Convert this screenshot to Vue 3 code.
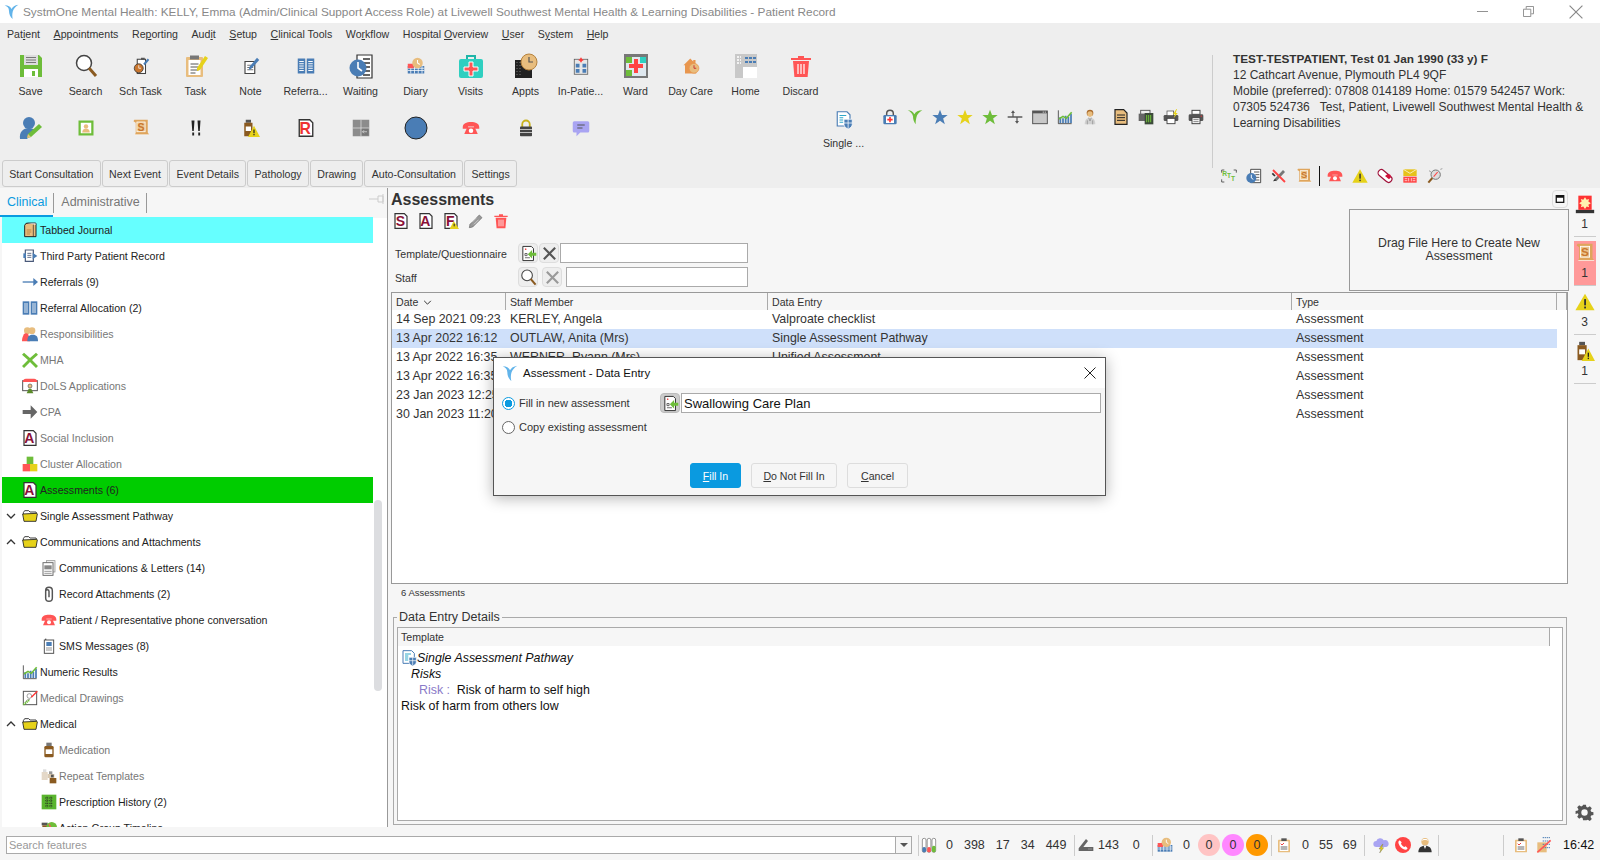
<script setup>
// small helpers for the icon artwork, everything is drawn in a 24x24 box
const phone = '<path d="M1 11c0-5 5-7 11-7s11 2 11 7v2h-7v-3H8v3H1z" fill="#f55"/><path d="M7 11h10l4 9H3z" fill="#f55"/><circle cx="12" cy="15.5" r="3" fill="#fff"/>'
const warn = '<path d="M12 2L23.5 22H.5z" fill="#e6d21a"/><rect x="11" y="8.5" width="2.2" height="7.5" fill="#333"/><rect x="11" y="17.5" width="2.2" height="2.2" fill="#333"/>'
const trash = '<path d="M9 2h6v2h7v2H2V4h7z" fill="#f55"/><path d="M4 7h16l-1.4 16H5.4z" fill="#f55"/><path d="M9 10v10M12 10v10M15 10v10" stroke="#fff" stroke-width="1.2"/>'
const folder = '<path d="M2 7l2-3h6l2 2h9l1 2v2H2z" fill="#fff" stroke="#222" stroke-width="1.3"/><path d="M1 9l21-1 1 1-2 11H3z" fill="#e6d21a" stroke="#222" stroke-width="1.3"/>'
const scroll = '<path d="M3 1h18v17l2 3H4l1-3V5L2 3z" fill="#dfa55c"/><path d="M4 21h19" stroke="#fff" stroke-width=".8"/><rect x="6.5" y="4" width="11" height="13" fill="#ecc68e" stroke="#fff" stroke-width="1"/><text x="12" y="15.5" text-anchor="middle" font-size="14" font-weight="700" font-family="Liberation Sans" fill="#c9762e">S</text>'
const rec = (c, l) => `<path d="M3 1h14l4 4v18H3z" fill="#fff" stroke="#333" stroke-width="1.8"/><text x="11" y="20" text-anchor="middle" font-size="21" font-weight="700" font-family="Liberation Sans" fill="${c}">${l}</text>`
const clip = '<rect x="3" y="4" width="18" height="19" rx="1" fill="#e8bd7e"/><rect x="5.5" y="6.5" width="13" height="14.5" fill="#fff"/><rect x="8" y="2" width="8" height="4" fill="#555"/><path d="M7 10l2 2 3-3" stroke="#e33" stroke-width="1.4" fill="none"/><path d="M7 15h10M7 18h10" stroke="#555" stroke-width="1.3"/>'
const chart = '<path d="M2 2v20h20" stroke="#333" fill="none" stroke-width="1.2"/><path d="M5 12v9M9 14v7M13 10v11M17 12v9M21 7v14" stroke="#4a7db5" stroke-width="2.6"/><path d="M3 15l6-4 5 3 8-9" stroke="#6ebd3a" stroke-width="2.4" fill="none"/>'
const referral = '<rect x="1" y="2" width="10" height="20" fill="#4a7db5"/><rect x="13" y="2" width="10" height="20" fill="#4a7db5"/><path d="M3 6h6M3 9h6M3 12h6M3 15h6M3 18h6M15 6h6M15 9h6M15 12h6M15 15h6M15 18h6" stroke="#fff" stroke-width="1.3"/>'
const tpl = '<path d="M4 2h12l3 3v17H4z" fill="#fff" stroke="#333" stroke-width="1.4"/><path d="M7 6h2M8 5v2" stroke="#e33" stroke-width="1.2"/><path d="M7 12h3v3H7zM7 18h7" stroke="#333" fill="none"/><path d="M23 11h-6V7l-6 6 6 6v-4h6z" fill="#6ebd3a"/>'
const printer = '<rect x="6" y="2" width="12" height="6" fill="#fff" stroke="#444" stroke-width="1.5"/><rect x="1" y="8" width="22" height="10" rx="2" fill="#555"/><rect x="6" y="13" width="12" height="9" fill="#fff" stroke="#444" stroke-width="1.5"/><path d="M8 16h8M8 19h8" stroke="#444"/><rect x="19" y="10" width="2" height="1.5" fill="#e33"/>'
const search = '<circle cx="10" cy="9" r="7.5" fill="#fff" stroke="#444" stroke-width="1.5"/><path d="M15 14l7 8" stroke="#8a5a20" stroke-width="3"/>'
const star = c => `<path d="M12 1l3 8h8.5l-6.8 5.3 2.6 8.7-7.3-5.3-7.3 5.3 2.6-8.7L.5 9H9z" fill="${c}"/>`
const clockDoc = '<path d="M7 2h15v20H7z" fill="#fff" stroke="#333" stroke-width="1.3"/><path d="M12 6h8M14 10h6M15 14h5M14 18h6" stroke="#333" stroke-width="1.2"/><circle cx="8" cy="15" r="7.5" fill="#4a7db5"/><path d="M8 10v5l3 2" stroke="#fff" stroke-width="1.4" fill="none"/>'
const diary = '<rect x="1" y="12" width="22" height="10" fill="#4a7db5"/><path d="M1 15h22M1 18h22M5 12v10M10 12v10M15 12v10M20 12v10" stroke="#fff"/><rect x="1" y="9" width="8" height="6" fill="#f55"/><circle cx="14" cy="8" r="7" fill="#e8bd7e"/><path d="M14 4v4l3 2" stroke="#fff" stroke-width="1.4" fill="none"/>'
const med = '<rect x="8" y="1" width="8" height="5" fill="#777"/><rect x="5" y="6" width="14" height="17" rx="2" fill="#8a5a20"/><rect x="7" y="11" width="10" height="7" fill="#fff"/>'

const icons = {
  logo: '<path d="M1 2c6 0 9 2 11 6 2-4 5-6 11-7-5 3-8 7-9 11-1 4-1 8 0 12-4-3-6-8-6-13C8 6 5 4 1 2z" fill="#62b4ea"/>',
  save: '<path d="M1 1h19l3 3v19H1z" fill="#6ebd3a"/><rect x="5" y="1" width="14" height="10" fill="#ddd"/><path d="M7 3.5h10M7 6h10M7 8.5h10" stroke="#777"/><rect x="5" y="15" width="14" height="8" fill="#fff"/><rect x="13" y="17" width="3" height="5" fill="#6ebd3a"/>',
  search,
  schtask: '<rect x="7" y="3" width="11" height="19" fill="#fff" stroke="#444" stroke-width="1.4"/><path d="M12 1h5v3h-5z" fill="#555"/><circle cx="9" cy="15" r="6" fill="#c9762e" stroke="#333"/><path d="M9 11v4h3" stroke="#fff" fill="none"/><path d="M15 9l6-7 2 2-6 7z" fill="#4a7db5"/>',
  task: '<rect x="2" y="3" width="17" height="20" rx="1" fill="#e8bd7e"/><rect x="4.5" y="6" width="12" height="15" fill="#fff"/><rect x="6" y="1.5" width="9" height="4" fill="#777"/><path d="M6.5 10h8M6.5 13h8M6.5 16h8M6.5 19h5" stroke="#555"/><path d="M13 14L21 2l3 2-8 12-3 1z" fill="#e6d21a"/>',
  note: '<path d="M4 6h13v16H4z" fill="#fff" stroke="#444" stroke-width="1.5"/><path d="M7 11h8M7 14h8M7 17h8" stroke="#444"/><path d="M10 13L20 1l3 3-11 12-3 1z" fill="#4a7db5"/>',
  referral,
  waiting: '<path d="M8 1h15v23H8z" fill="#fff" stroke="#333" stroke-width="1.2"/><path d="M14 5h7M14 9h7M16 13h5M16 17h5M14 21h7" stroke="#333" stroke-width="1.3"/><circle cx="9" cy="14" r="8.5" fill="#4a7db5"/><path d="M9 8v6l4 3" stroke="#fff" stroke-width="1.6" fill="none"/>',
  diary,
  visits: '<path d="M8 5V2h8v3" fill="none" stroke="#1fb5a8" stroke-width="2"/><rect x="0" y="5" width="24" height="19" rx="2" fill="#2fcfc0"/><path d="M10 8h4v5h5v4h-5v5h-4v-5H5v-4h5z" fill="#f55" stroke="#fff"/>',
  appts: '<rect x="1" y="6" width="17" height="18" fill="#222"/><path d="M3 8v14M6 8v14" stroke="#777" stroke-dasharray="1 2"/><circle cx="15" cy="8" r="8" fill="#e8bd7e" stroke="#b5823e"/><path d="M15 3v5h4" stroke="#555" fill="none" stroke-width="1.2"/>',
  inpatient: '<rect x="3" y="3" width="18" height="20" fill="#e7e7e7" stroke="#555"/><path d="M12 1v6M9 4h6" stroke="#f33" stroke-width="2"/><path d="M5 9h5v5H5zM14 9h5v5h-5zM5 16h5v5H5zM14 16h5v5h-5z" fill="#4a7db5"/>',
  ward: '<rect x="0" y="0" width="24" height="24" fill="#777"/><rect x="2" y="3" width="20" height="19" fill="#dfe8ef"/><rect x="2" y="3" width="6" height="6" fill="#6ebd3a"/><rect x="16" y="3" width="6" height="6" fill="#2fcfc0"/><rect x="2" y="16" width="6" height="6" fill="#6ebd3a"/><path d="M10 5h4v5h5v4h-5v5h-4v-5H5v-4h5z" fill="#f44"/>',
  daycare: '<path d="M2 11l9-9 4 4V4h3v5l3 3h-2v10H4V11z" fill="#e8964e"/><circle cx="16" cy="15" r="6.5" fill="#e8bd7e" stroke="#e8964e"/><path d="M16 11v4h3" stroke="#c33" fill="none" stroke-width="1.3"/>',
  home: '<rect x="1" y="0" width="22" height="24" fill="#c8c8c8"/><rect x="9" y="13" width="14" height="11" fill="#fff"/><path d="M3 3h2M3 6h2M3 9h2M6 3h1M6 6h1M6 9h1" stroke="#fff" stroke-width="1.6"/><path d="M11 3h3v2h-3zM15 3h3v2h-3zM19 3h3v2h-3zM11 7h3v2h-3zM15 7h3v2h-3zM19 7h3v2h-3z" fill="#4a7db5"/>',
  trash,
  person: '<circle cx="10" cy="7" r="6" fill="#4a7db5"/><path d="M1 23c-1-7 3-11 9-11 3 0 5 1 6 2L8 23z" fill="#4a7db5"/><path d="M8 22l1-4L20 8l3 3-11 10z" fill="#6ebd3a"/><path d="M8 22l1-4 3 3z" fill="#e8bd7e"/>',
  photo: '<rect x="2" y="2" width="20" height="20" fill="#6ebd3a"/><rect x="5" y="5" width="14" height="14" fill="#fff"/><circle cx="12" cy="10" r="3" fill="#e8bd7e"/><path d="M7 18c0-4 2-5 5-5s5 1 5 5z" fill="#e8bd7e"/>',
  scroll,
  exclam: '<path d="M6 2h4L9 16H7zM14 2h4l-1 14h-2z" fill="#222"/><rect x="7" y="18" width="2.5" height="4" fill="#222"/><rect x="15" y="18" width="2.5" height="4" fill="#222"/>',
  medwarn: '<rect x="5" y="1" width="7" height="4" fill="#555"/><rect x="3" y="5" width="11" height="18" fill="#8a5a20"/><rect x="5" y="10" width="7" height="6" fill="#fff"/><path d="M16 9l8 15H8z" fill="#e6d21a"/><rect x="15.2" y="14" width="1.6" height="5" fill="#222"/><rect x="15.2" y="20" width="1.6" height="1.7" fill="#222"/>',
  recR: rec('#e33', 'R'),
  grid: '<rect x="1" y="1" width="22" height="22" fill="#8c8c8c"/><path d="M12 1v22M1 12h22" stroke="#ddd"/><rect x="13" y="13" width="9" height="9" fill="#777"/><path d="M20 17h-6m2-2l-2 2 2 2" stroke="#ddd" fill="none"/>',
  circle: '<circle cx="12" cy="12" r="11" fill="#4a7db5" stroke="#222" stroke-width="1"/>',
  phone,
  lock: '<path d="M7 11V7a5 5 0 0 1 10 0v4" fill="none" stroke="#c9b21a" stroke-width="2.4"/><rect x="4" y="10" width="16" height="13" rx="1" fill="#444"/><path d="M4 14h16M4 18h16" stroke="#ccc" stroke-width="1.2"/>',
  chat: '<path d="M3 3h18a2 2 0 0 1 2 2v11a2 2 0 0 1-2 2H11l-5 5v-5H3a2 2 0 0 1-2-2V5a2 2 0 0 1 2-2z" fill="#a9a4f2"/><path d="M7 8h10M7 12h7" stroke="#555" stroke-width="1.4"/>',
  single: '<path d="M3 1h13l4 4v15H3z" fill="#fff" stroke="#4a7db5" stroke-width="1.5"/><path d="M6 6h9M6 9h5M6 12h5M6 15h5" stroke="#2fa8c9" stroke-width="1.5"/><path d="M12 11h11v7c0 3-3 5-5.5 6C15 23 12 21 12 18z" fill="#4a7db5" stroke="#fff"/><path d="M17.5 11v12M12 16h11" stroke="#fff"/>',
  medlock: '<path d="M7 10V7a5 5 0 0 1 10 0v3" fill="none" stroke="#555" stroke-width="2.2"/><rect x="2" y="9" width="20" height="14" rx="2" fill="#4a7db5"/><rect x="6" y="11" width="12" height="10" fill="#fff"/><path d="M12 12v8M8 16h8" stroke="#f33" stroke-width="2.4"/>',
  sprout: '<path d="M1 2c5 0 8 2 10 6 2-4 6-6 12-6-5 3-8 6-9 11-1 4-1 7-1 10-3-4-4-8-4-12C8 7 5 4 1 2z" fill="#6ebd3a"/>',
  starB: star('#4a7db5'),
  starY: star('#e6d21a'),
  starG: star('#6ebd3a'),
  split: '<path d="M1 12h22" stroke="#555" stroke-width="2.2"/><path d="M9 5v7M15 12v7" stroke="#555" stroke-width="1.8"/><path d="M6 6l3-4 3 4zM12 18l3 4 3-4z" fill="#555"/>',
  window: '<rect x="1" y="3" width="22" height="19" fill="#c8c8c8" stroke="#555" stroke-width="1.5"/><rect x="1" y="3" width="22" height="3.5" fill="#555"/><path d="M16 4.7h2M19 4.7h2" stroke="#fff"/>',
  chart,
  doctor: '<circle cx="12" cy="6" r="5" fill="#a8692a"/><circle cx="12" cy="7.5" r="4" fill="#e8bd7e"/><path d="M4 23c0-7 3-10 8-10s8 3 8 10z" fill="#d0d0d0"/><path d="M10 13l2 5 2-5M8 17v6M16 17v6" stroke="#888" fill="none"/>',
  docY: '<path d="M3 1h13l5 5v17H3z" fill="#e8bd7e" stroke="#222" stroke-width="1.8"/><path d="M6 9h12M6 13h12M6 17h12" stroke="#222" stroke-width="1.5"/>',
  printG: '<rect x="4" y="2" width="14" height="6" fill="#eee" stroke="#555" stroke-width="1.4"/><rect x="1" y="7" width="16" height="11" fill="#666"/><rect x="10" y="6" width="13" height="17" fill="#3c4a3a"/><path d="M13 9v11M16 9v11M19 9v11" stroke="#6ebd3a" stroke-width="1.6"/>',
  printF: '<rect x="1" y="9" width="22" height="9" rx="2" fill="#555"/><rect x="6" y="3" width="10" height="7" fill="#fff" stroke="#444"/><rect x="6" y="14" width="12" height="8" fill="#fff" stroke="#444" stroke-width="1.4"/><path d="M20 0l-5 8h3l-2 6 6-8h-3l2-6z" fill="#e6d21a"/>',
  printer,
  rtt: '<path d="M1 7V3h4M23 7V3h-4M1 17v4h4" stroke="#555" fill="none" stroke-width="1.4"/><text x="2" y="12" font-size="10" font-weight="700" font-family="Liberation Sans" fill="#6ebd3a">R</text><text x="9" y="15" font-size="10" font-weight="700" font-family="Liberation Sans" fill="#6ebd3a">T</text><text x="15" y="20" font-size="10" font-weight="700" font-family="Liberation Sans" fill="#6ebd3a">T</text>',
  clockDoc,
  toolX: '<path d="M5 17L18 3l3 3L8 20z" fill="#777"/><path d="M3 20l3-4 2 3z" fill="#333"/><path d="M3 3l18 18" stroke="#f44" stroke-width="2.8"/><path d="M2 8l4 4" stroke="#333" stroke-width="2.6"/>',
  pill: '<rect x="0" y="7" width="24" height="10" rx="5" transform="rotate(40 12 12)" fill="#fff" stroke="#a0123a" stroke-width="1.8"/><path d="M12 12l6 5 3-3-1-4-4-1z" fill="#d0123a"/>',
  sms: '<rect x="2" y="2" width="20" height="10" fill="#e6c21a"/><path d="M2 2l10 6 10-6" stroke="#fff" fill="none"/><rect x="2" y="13" width="20" height="9" fill="#f44"/><path d="M4 16h4M4 19h4M10 15v5M14 15v5M16 16h4M16 19h4" stroke="#fff"/>',
  magnify: '<circle cx="13" cy="10" r="7" fill="#ddd" stroke="#777" stroke-width="1.5"/><path d="M8 15l-6 7" stroke="#8a5a20" stroke-width="3"/><path d="M10 13l6-7" stroke="#f44" stroke-width="1.6"/><path d="M20 2l3-1M3 4l3 2" stroke="#777"/>',
  max: '<rect x="3" y="4" width="18" height="16" fill="#fff" stroke="#111" stroke-width="3"/><rect x="3" y="4" width="18" height="5" fill="#111"/>',
  alarm: '<rect x="1" y="19" width="22" height="4" fill="#333"/><rect x="4" y="2" width="16" height="17" fill="#f33"/><path d="M12 4l2 3 3-1-1 3 3 2-3 2 1 3-3-1-2 3-2-3-3 1 1-3-3-2 3-2-1-3 3 1z" fill="#fff3b0"/>',
  warn,
  journal: '<path d="M6 2h13a2 2 0 0 1 2 2v18H4V5z" fill="#e8bd7e" stroke="#222" stroke-width="1.5"/><path d="M8 2v-.5h13V4" fill="#fff" stroke="#222"/><path d="M17 4v18" stroke="#222"/><path d="M7 12h7M7 15h7M7 18h5" stroke="#b5823e" stroke-width="1.3"/>',
  third: '<path d="M5 3h12v17H5z" fill="#fff" stroke="#4a5a7a" stroke-width="1.8"/><path d="M8 8h6M8 11h6M8 14h6" stroke="#4a5a7a" stroke-width="1.3"/><path d="M2 8h4v7H2z" fill="#4a7db5"/><path d="M16 7l7 5-7 5z" fill="#4a7db5"/>',
  arrowB: '<path d="M1 11h18v2H1z" fill="#4a7db5"/><path d="M17 6l7 6-7 6z" fill="#4a7db5"/>',
  people: '<circle cx="8" cy="7" r="5" fill="#e8bd7e"/><circle cx="15" cy="7" r="5" fill="#e8bd7e"/><path d="M0 23c0-7 2-10 6-10s6 3 6 10z" fill="#f55"/><circle cx="6" cy="15" r="4" fill="#f55"/><path d="M8 23c0-7 2-10 8-10s8 3 8 10z" fill="#4a7db5"/>',
  xG: '<path d="M3 1l9 8 9-8 3 3-9 8 9 9-3 3-9-9-9 9-3-3 9-9-9-8z" fill="#6ebd3a"/>',
  dols: '<rect x="1" y="4" width="22" height="15" fill="#fff" stroke="#555" stroke-width="1.5"/><path d="M1 6c0-3 2-5 5-5h12c3 0 5 2 5 5z" fill="#f55"/><circle cx="12" cy="12" r="3" fill="#e8bd7e" stroke="#555"/><path d="M7 23l3-7h4l3 7z" fill="#5a8a2a"/>',
  arrowG: '<path d="M1 9h12V2l10 10-10 10v-7H1z" fill="#666"/>',
  recA: rec('#8a1038', 'A'),
  recS: rec('#8a1038', 'S'),
  recF: rec('#8a1038', 'F') + '<path d="M16 12l8 12h-14z" fill="#e6d21a"/><rect x="16" y="16" width="1.5" height="4" fill="#222"/>',
  cluster: '<rect x="7" y="1" width="10" height="11" fill="#6ebd3a"/><rect x="1" y="12" width="11" height="11" fill="#f55"/><rect x="12" y="12" width="11" height="11" fill="#e6d21a"/>',
  folder,
  letters: '<rect x="8" y="1" width="13" height="17" fill="#eee" stroke="#888"/><rect x="3" y="4" width="15" height="19" fill="#fff" stroke="#666" stroke-width="1.4"/><rect x="5" y="8" width="11" height="6" fill="#888"/><path d="M5 17h11M5 20h11" stroke="#666"/>',
  clip: '<path d="M7 7a5 5 0 0 1 10 0v11a5 5 0 0 1-10 0V8a2.5 2.5 0 0 1 5 0v9" fill="none" stroke="#555" stroke-width="2.2"/>',
  mobile: '<rect x="6" y="1" width="2" height="3" fill="#555"/><rect x="5" y="3" width="14" height="20" fill="#fff" stroke="#555" stroke-width="1.5"/><rect x="8" y="6" width="8" height="6" fill="#4a7db5"/><path d="M8 15h2M11 15h2M14 15h2M8 18h2M11 18h2M14 18h2" stroke="#555" stroke-width="1.4"/>',
  drawing: '<rect x="2" y="2" width="20" height="20" fill="#fff" stroke="#555" stroke-width="1.5"/><circle cx="11" cy="9" r="3.5" fill="none" stroke="#777"/><path d="M5 19c1-4 4-5 7-5" stroke="#777" fill="none"/><path d="M23 2l-9 9" stroke="#f33" stroke-width="2"/><path d="M2 22l9-7" stroke="#6ebd3a" stroke-width="3" stroke-dasharray="2 1"/>',
  med,
  repeat: '<rect x="3" y="2" width="5" height="4" fill="#ddd"/><rect x="1" y="6" width="9" height="12" fill="#e4d8c8"/><rect x="12" y="5" width="5" height="4" fill="#999"/><rect x="10" y="9" width="10" height="6" fill="#d8c8b0"/><rect x="15" y="10" width="4" height="4" fill="#555"/><rect x="13" y="15" width="10" height="8" fill="#8a5a20"/>',
  rx: '<rect x="1" y="1" width="22" height="22" fill="#5ab52e"/><path d="M9 4v16M15 4v16M6 6h12M6 10h12M6 14h12M6 18h12" stroke="#222" stroke-dasharray="2 1"/>',
  action: '<rect x="1" y="4" width="9" height="4" fill="#555"/><rect x="2" y="8" width="7" height="15" fill="#8a5a20"/><circle cx="16" cy="11" r="8" fill="#6ebd3a"/><path d="M12 6l6 12" stroke="#f55" stroke-width="1.8"/>',
  tpl,
  tubes: '<rect x="2" y="2" width="5.5" height="21" rx="2.5" fill="#fff" stroke="#666"/><rect x="2" y="15" width="5.5" height="8" rx="2.5" fill="#4a7db5"/><rect x="9.3" y="2" width="5.5" height="21" rx="2.5" fill="#fff" stroke="#666"/><rect x="9.3" y="15" width="5.5" height="8" rx="2.5" fill="#f55"/><rect x="16.5" y="2" width="5.5" height="21" rx="2.5" fill="#fff" stroke="#666"/><rect x="16.5" y="13" width="5.5" height="10" rx="2.5" fill="#6ebd3a"/>',
  router: '<path d="M1 17l11-14 3 3-7 9h15v6H1z" fill="#666"/><path d="M16 18h1M19 18h1" stroke="#fff" stroke-width="1.4"/>',
  clipboard: clip,
  cloud: '<path d="M5 15a4.5 4.5 0 0 1 0-9 6 6 0 0 1 11-1 5 5 0 0 1 4 10z" fill="#a9a4f2"/><path d="M14 11l-5 7h3l-2 6 6-8h-3l2-5z" fill="#e6d21a" stroke="#555" stroke-width=".5"/>',
  phoneC: '<circle cx="12" cy="12" r="12" fill="#f44"/><path d="M7 5l3 3-1 2c1 2 3 4 5 5l2-1 3 3-2 2c-5 1-12-6-12-12z" fill="#fff"/>',
  agent: '<circle cx="12" cy="7" r="5.5" fill="#e8bd7e"/><path d="M7 6c0-4 10-4 10 0-2-2-8-2-10 0z" fill="#fff"/><path d="M2 23c0-7 4-10 10-10s10 3 10 10z" fill="#333"/><path d="M10 13h4l-2 5z" fill="#fff"/>',
  strike: '<rect x="2" y="8" width="14" height="15" fill="#e8bd7e"/><path d="M10 1h12M10 6h12M10 11h12M10 16h12" stroke="#4a7db5" stroke-width="1.5" stroke-dasharray="2 1"/><path d="M2 23L22 5" stroke="#f55" stroke-width="2.2"/>',
  gear: '<path d="M10 1h4l.7 3.2 2 .9 2.8-1.8 2.8 2.8-1.8 2.8.9 2 3.2.7v4l-3.2.7-.9 2 1.8 2.8-2.8 2.8-2.8-1.8-2 .9L14 23h-4l-.7-3.2-2-.9-2.8 1.8-2.8-2.8 1.8-2.8-.9-2L-.6 14v-4l3.2-.7.9-2-1.8-2.8 2.8-2.8 2.8 1.8 2-.9z" fill="#555"/><circle cx="12" cy="12" r="4.5" fill="#f6f6f6"/>'
}

const menus = ['Pat&ient', '&Appointments', 'Re&porting', 'Aud&it', '&Setup', '&Clinical Tools', 'Wo&rkflow', 'Hospital &Overview', '&User', 'S&ystem', '&Help']

const toolsTop = [
  { label: 'Save', icon: 'save' }, { label: 'Search', icon: 'search' }, { label: 'Sch Task', icon: 'schtask', small: true },
  { label: 'Task', icon: 'task' }, { label: 'Note', icon: 'note', small: true }, { label: 'Referra...', icon: 'referral', small: true },
  { label: 'Waiting', icon: 'waiting' }, { label: 'Diary', icon: 'diary', small: true }, { label: 'Visits', icon: 'visits' },
  { label: 'Appts', icon: 'appts' }, { label: 'In-Patie...', icon: 'inpatient', small: true }, { label: 'Ward', icon: 'ward' },
  { label: 'Day Care', icon: 'daycare', small: true }, { label: 'Home', icon: 'home' }, { label: 'Discard', icon: 'trash' }
]
const toolsSecond = [
  { icon: 'person' }, { icon: 'photo', small: true }, { icon: 'scroll', small: true }, { icon: 'exclam', small: true },
  { icon: 'medwarn', small: true }, { icon: 'recR', small: true }, { icon: 'grid', small: true }, { icon: 'circle' },
  { icon: 'phone', small: true }, { icon: 'lock', small: true }, { icon: 'chat', small: true }
]
const miniTools = ['medlock', 'sprout', 'starB', 'starY', 'starG', 'split', 'window', 'chart', 'doctor', 'docY', 'printG', 'printF', 'printer']
const tabs = ['Start Consultation', 'Next Event', 'Event Details', 'Pathology', 'Drawing', 'Auto-Consultation', 'Settings']

const sideItems = [
  { label: 'Tabbed Journal', icon: 'journal', hl: 'cyan' },
  { label: 'Third Party Patient Record', icon: 'third' },
  { label: 'Referrals (9)', icon: 'arrowB' },
  { label: 'Referral Allocation (2)', icon: 'referral' },
  { label: 'Responsibilities', icon: 'people', muted: true },
  { label: 'MHA', icon: 'xG', muted: true },
  { label: 'DoLS Applications', icon: 'dols', muted: true },
  { label: 'CPA', icon: 'arrowG', muted: true },
  { label: 'Social Inclusion', icon: 'recA', muted: true },
  { label: 'Cluster Allocation', icon: 'cluster', muted: true },
  { label: 'Assessments (6)', icon: 'recA', hl: 'green' },
  { label: 'Single Assessment Pathway', icon: 'folder', chevron: 'down' },
  { label: 'Communications and Attachments', icon: 'folder', chevron: 'up' },
  { label: 'Communications & Letters (14)', icon: 'letters', sub: true },
  { label: 'Record Attachments (2)', icon: 'clip', sub: true },
  { label: 'Patient / Representative phone conversation', icon: 'phone', sub: true },
  { label: 'SMS Messages (8)', icon: 'mobile', sub: true },
  { label: 'Numeric Results', icon: 'chart' },
  { label: 'Medical Drawings', icon: 'drawing', muted: true },
  { label: 'Medical', icon: 'folder', chevron: 'up' },
  { label: 'Medication', icon: 'med', sub: true, muted: true },
  { label: 'Repeat Templates', icon: 'repeat', sub: true, muted: true },
  { label: 'Prescription History (2)', icon: 'rx', sub: true },
  { label: 'Action Group Timeline', icon: 'action', sub: true }
]

const rows = [
  { date: '14 Sep 2021 09:23', staff: 'KERLEY, Angela', entry: 'Valproate checklist' },
  { date: '13 Apr 2022 16:12', staff: 'OUTLAW, Anita (Mrs)', entry: 'Single Assessment Pathway', selected: true },
  { date: '13 Apr 2022 16:35', staff: 'WERNER, Ryann (Mrs)', entry: 'Unified Assessment' },
  { date: '13 Apr 2022 16:35', staff: '', entry: '' },
  { date: '23 Jan 2023 12:25', staff: '', entry: '' },
  { date: '30 Jan 2023 11:20', staff: '', entry: '' }
]

const railItems = [
  { icon: 'alarm', count: 1 },
  { icon: 'scroll', count: 1, hot: true },
  { icon: 'warn', count: 3 },
  { icon: 'medwarn', count: 1 }
]

// "Re&porting" -> the letter after & gets the underline
function accel(text) {
  const i = text.indexOf('&')
  return { before: text.slice(0, i), key: text[i + 1], after: text.slice(i + 2) }
}
</script>

<template>
  <div class="app">
    <div class="titlebar">
      <svg class="ic logo" viewBox="0 0 24 24" v-html="icons.logo"></svg>
      <span class="title-text">SystmOne Mental Health: KELLY, Emma (Admin/Clinical Support Access Role) at Livewell Southwest Mental Health &amp; Learning Disabilities - Patient Record</span>
      <div class="win-btns">
        <svg viewBox="0 0 12 12" class="win"><path d="M0 6h12" stroke="#888" /></svg>
        <svg viewBox="0 0 12 12" class="win"><path d="M.5 3.5h8v8h-8zM3.5 3V.5h8v8H9" stroke="#888" fill="none" /></svg>
        <svg viewBox="0 0 12 12" class="win"><path d="M.5.5l11 11M11.5.5l-11 11" stroke="#888" fill="none" /></svg>
      </div>
    </div>

    <div class="header">
      <div class="header-left">
        <div class="menu">
          <span v-for="m in menus" :key="m" class="menu-item">{{ accel(m).before }}<u>{{ accel(m).key }}</u>{{ accel(m).after }}</span>
        </div>
        <div class="tools-top">
          <div v-for="t in toolsTop" :key="t.label" class="tool">
            <span class="tool-box"><svg class="ic" :class="t.small ? 'ic-m' : 'ic-l'" viewBox="0 0 24 24" v-html="icons[t.icon]"></svg></span>
            <span class="tool-label">{{ t.label }}</span>
          </div>
        </div>
        <div class="tools-second">
          <div v-for="t in toolsSecond" :key="t.icon" class="tool-plain">
            <svg class="ic" :class="t.small ? 'ic-m' : 'ic-l'" viewBox="0 0 24 24" v-html="icons[t.icon]"></svg>
          </div>
          <div class="tool single">
            <span class="tool-box"><svg class="ic ic-m" viewBox="0 0 24 24" v-html="icons.single"></svg></span>
            <span class="tool-label">Single ...</span>
          </div>
          <div class="mini-tools">
            <span v-for="n in miniTools" :key="n" class="mini"><svg class="ic" viewBox="0 0 24 24" v-html="icons[n]"></svg></span>
          </div>
        </div>
        <div class="tabs">
          <button v-for="t in tabs" :key="t" class="tab-btn">{{ t }}</button>
        </div>
      </div>
      <div class="header-right">
        <div class="patient">
          <div class="patient-name">TEST-TESTPATIENT, Test 01 Jan 1990 (33 y) F</div>
          <div>12 Cathcart Avenue, Plymouth PL4 9QF</div>
          <div>Mobile (preferred): 07808 014189 Home: 01579 542457 Work:</div>
          <div>07305 524736 &nbsp;&nbsp;Test, Patient, Livewell Southwest Mental Health &amp;</div>
          <div>Learning Disabilities</div>
        </div>
        <div class="patient-icons">
          <svg class="ic" viewBox="0 0 24 24" v-html="icons.rtt"></svg>
          <svg class="ic" viewBox="0 0 24 24" v-html="icons.clockDoc"></svg>
          <svg class="ic" viewBox="0 0 24 24" v-html="icons.toolX"></svg>
          <svg class="ic" viewBox="0 0 24 24" v-html="icons.scroll"></svg>
          <span class="black-sep"></span>
          <svg class="ic" viewBox="0 0 24 24" v-html="icons.phone"></svg>
          <svg class="ic" viewBox="0 0 24 24" v-html="icons.warn"></svg>
          <svg class="ic" viewBox="0 0 24 24" v-html="icons.pill"></svg>
          <svg class="ic" viewBox="0 0 24 24" v-html="icons.sms"></svg>
          <svg class="ic" viewBox="0 0 24 24" v-html="icons.magnify"></svg>
        </div>
      </div>
    </div>

    <div class="body">
      <aside class="sidebar">
        <div class="side-tabs">
          <span class="side-tab active">Clinical</span>
          <span class="side-tab">Administrative</span>
          <svg class="pin" viewBox="0 0 16 10"><path d="M0 5h9M9 2h5v6H9zM14 0v10" stroke="#ccc" fill="none" /></svg>
        </div>
        <div class="side-body">
          <ul class="side-list">
            <li v-for="item in sideItems" :key="item.label" class="side-row" :class="[item.hl, { sub: item.sub, muted: item.muted }]">
              <svg v-if="item.chevron" class="chev" :class="item.chevron" viewBox="0 0 10 6"><path d="M1 1l4 4 4-4" fill="none" stroke="#333" stroke-width="1.3" /></svg>
              <svg class="ic" viewBox="0 0 24 24" v-html="icons[item.icon]"></svg>
              <span>{{ item.label }}</span>
            </li>
          </ul>
          <div class="side-scroll"><div class="side-thumb"></div></div>
        </div>
      </aside>

      <main class="content">
        <div class="content-top">
          <div class="content-head">
            <h1>Assessments</h1>
            <div class="action-icons">
              <svg class="ic" viewBox="0 0 24 24" v-html="icons.recS"></svg>
              <svg class="ic" viewBox="0 0 24 24" v-html="icons.recA"></svg>
              <svg class="ic" viewBox="0 0 24 24" v-html="icons.recF"></svg>
              <svg class="ic" viewBox="0 0 24 24"><path d="M3 17L17 3l4 4L7 21l-5 1z" fill="#999" stroke="#666" /><path d="M6 14l7-7M9 17l7-7" stroke="#eee" /></svg>
              <svg class="ic" viewBox="0 0 24 24" v-html="icons.trash"></svg>
            </div>
            <div class="filter">
              <label>Template/Questionnaire</label>
              <span class="sq-btn"><svg class="ic ic-b" viewBox="0 0 24 24" v-html="icons.tpl"></svg></span>
              <span class="sq-btn"><svg class="ic ic-b" viewBox="0 0 24 24"><path d="M4 4l16 16M20 4L4 20" stroke="#555" stroke-width="3" /></svg></span>
              <input class="field" />
            </div>
            <div class="filter loose">
              <label>Staff</label>
              <span class="sq-btn"><svg class="ic ic-b" viewBox="0 0 24 24" v-html="icons.search"></svg></span>
              <span class="sq-btn"><svg class="ic ic-b" viewBox="0 0 24 24"><path d="M4 4l16 16M20 4L4 20" stroke="#999" stroke-width="3" /></svg></span>
              <input class="field" />
            </div>
          </div>
          <div class="drop-col">
            <span class="max-btn"><svg viewBox="0 0 24 24" v-html="icons.max"></svg></span>
            <div class="drop-box">Drag File Here to Create New Assessment</div>
          </div>
        </div>

        <div class="table">
          <div class="t-row t-head">
            <div>Date <svg class="sort" viewBox="0 0 10 6"><path d="M1 1l4 4 4-4" fill="none" stroke="#333" stroke-width="1.2" /></svg></div>
            <div>Staff Member</div>
            <div>Data Entry</div>
            <div>Type</div>
            <div></div>
          </div>
          <div class="t-body">
            <div v-for="r in rows" :key="r.date + r.staff" class="t-row" :class="{ selected: r.selected }">
              <div>{{ r.date }}</div>
              <div>{{ r.staff }}</div>
              <div>{{ r.entry }}</div>
              <div>Assessment</div>
              <div></div>
            </div>
          </div>
        </div>
        <div class="count">6 Assessments</div>

        <fieldset class="details">
          <legend>Data Entry Details</legend>
          <div class="details-box">
            <div class="details-head"><span>Template</span></div>
            <div class="details-text">
              <div class="em"><svg class="ic" viewBox="0 0 24 24" v-html="icons.single"></svg>Single Assessment Pathway</div>
              <div class="em indent1">Risks</div>
              <div class="indent2"><span class="risk">Risk :</span>&nbsp; Risk of harm to self high</div>
              <div>Risk of harm from others low</div>
            </div>
          </div>
        </fieldset>
      </main>

      <aside class="rail">
        <div class="rail-list">
          <div v-for="(r, i) in railItems" :key="i" class="rail-item" :class="{ hot: r.hot }">
            <svg class="ic" viewBox="0 0 24 24" v-html="icons[r.icon]"></svg>
            <span>{{ r.count }}</span>
          </div>
        </div>
        <svg class="ic gear" viewBox="0 0 24 24" v-html="icons.gear"></svg>
      </aside>
    </div>

    <footer class="status">
      <div class="feature-search">
        <span class="feature-text">Search features</span>
        <span class="feature-drop"></span>
      </div>
      <div class="st-group g1">
        <svg class="ic" viewBox="0 0 24 24" v-html="icons.tubes"></svg>
        <span>0</span><span>398</span><span>17</span><span>34</span><span>449</span>
      </div>
      <div class="st-group g2">
        <svg class="ic" viewBox="0 0 24 24" v-html="icons.router"></svg>
        <span>143</span><span class="far">0</span>
      </div>
      <div class="st-group g3">
        <svg class="ic" viewBox="0 0 24 24" v-html="icons.diary"></svg>
        <span>0</span>
        <span class="dot pink">0</span><span class="dot violet">0</span><span class="dot orange">0</span>
      </div>
      <div class="st-group g4">
        <svg class="ic" viewBox="0 0 24 24" v-html="icons.clipboard"></svg>
        <span>0</span><span>55</span><span>69</span>
      </div>
      <div class="st-group g5">
        <svg class="ic" viewBox="0 0 24 24" v-html="icons.cloud"></svg>
        <svg class="ic" viewBox="0 0 24 24" v-html="icons.phoneC"></svg>
        <svg class="ic" viewBox="0 0 24 24" v-html="icons.agent"></svg>
      </div>
      <div class="st-group g6">
        <svg class="ic" viewBox="0 0 24 24" v-html="icons.clipboard"></svg>
        <svg class="ic" viewBox="0 0 24 24" v-html="icons.strike"></svg>
        <span class="clock">16:42</span>
      </div>
    </footer>

    <div class="dialog">
      <div class="dialog-title">
        <svg class="ic" viewBox="0 0 24 24" v-html="icons.logo"></svg>
        <span>Assessment - Data Entry</span>
        <svg class="dialog-close" viewBox="0 0 12 12"><path d="M.5.5l11 11M11.5.5l-11 11" stroke="#222" /></svg>
      </div>
      <div class="dialog-body">
        <div class="dialog-row">
          <span class="radio on"></span>
          <span class="radio-label">Fill in new assessment</span>
          <span class="sq-btn pressed"><svg class="ic ic-b" viewBox="0 0 24 24" v-html="icons.tpl"></svg></span>
          <input class="field big" value="Swallowing Care Plan" />
        </div>
        <div class="dialog-row second">
          <span class="radio"></span>
          <span class="radio-label">Copy existing assessment</span>
        </div>
        <div class="dialog-btns">
          <button class="dlg-btn primary"><u>F</u>ill In</button>
          <button class="dlg-btn wide"><u>D</u>o Not Fill In</button>
          <button class="dlg-btn"><u>C</u>ancel</button>
        </div>
      </div>
    </div>
  </div>
</template>

<style>
html, body { margin: 0; background: #f6f6f6; }
</style>

<style scoped>
.app {
  position: relative;
  width: 1600px;
  height: 860px;
  display: flex;
  flex-direction: column;
  overflow: hidden;
  background: #f6f6f6;
  color: #333;
  font-family: "Liberation Sans", Arial, sans-serif;
  font-size: 10.6px;
}

.ic { width: 16px; height: 16px; flex: none; display: block; overflow: visible; }
.ic-m { width: 18px; height: 18px; }
.ic-l { width: 24px; height: 24px; }
.ic-b { width: 17px; height: 17px; }

/* title */
.titlebar {
  height: 23px;
  flex: none;
  display: flex;
  align-items: center;
  background: #fff;
  padding-left: 4px;
}
.logo { width: 15px; height: 15px; margin-right: 4px; }
.title-text { color: #888; font-size: 11.8px; }
.win-btns { margin-left: auto; display: flex; gap: 35px; margin-right: 17px; align-items: center; }
.win { width: 11px; height: 11px; }
.win:last-child { width: 14px; height: 14px; }

/* header */
.header { height: 165px; flex: none; display: flex; background: #eee; }
.header-left { width: 1212px; flex: none; }
.menu { height: 22px; display: flex; align-items: center; padding-left: 7px; gap: 13.6px; color: #333; }
.tools-top { height: 60px; display: flex; padding-left: 3px; padding-top: 9px; box-sizing: border-box; }
.tool { width: 55px; flex: none; display: flex; flex-direction: column; align-items: center; }
.tool-box { height: 24px; display: flex; align-items: center; justify-content: center; }
.tool-label { margin-top: 6px; white-space: nowrap; line-height: 14px; }
.tools-second { height: 55px; display: flex; padding-left: 3px; align-items: flex-start; }
.tool-plain { width: 55px; flex: none; height: 24px; margin-top: 11px; display: flex; align-items: center; justify-content: center; }
.single { margin-left: 208px; margin-top: 3px; }
.single .tool-label { margin-top: 4px; }
.mini-tools { display: flex; margin-left: 6px; margin-top: 3px; }
.mini { width: 25px; height: 18px; display: flex; justify-content: center; align-items: center; }
.mini:nth-child(10) { margin-left: 6px; }
.tabs { display: flex; gap: 1px; padding-left: 2px; }
.tab-btn {
  height: 27px;
  padding: 0 6.3px;
  border: 1px solid #ccc;
  border-radius: 3px;
  background: #eee;
  color: #333;
  font: inherit;
}

.header-right {
  flex: 1;
  display: flex;
  flex-direction: column;
  padding-top: 28px;
  position: relative;
}
.header-right::before {
  content: "";
  position: absolute;
  left: 0;
  top: 32px;
  height: 113px;
  border-left: 1px solid #ccc;
}
.patient { padding-left: 21px; font-size: 12px; line-height: 16px; color: #333; }
.patient-name { font-weight: 700; font-size: 11.8px; }
.patient-icons { display: flex; align-items: center; gap: 9px; margin-top: auto; height: 22px; padding-left: 9px; margin-bottom: 1px; }
.black-sep { width: 1px; height: 20px; background: #111; margin: 0 -2px; }

/* body */
.body { flex: 1; display: flex; min-height: 0; }
.sidebar {
  width: 387px;
  flex: none;
  display: flex;
  flex-direction: column;
  margin-bottom: 3px;
  border-right: 1px solid #999;
}
.side-tabs { height: 30px; display: flex; flex: none; position: relative; font-size: 12.5px; color: #777; box-sizing: border-box; padding-top: 5px; }
.side-tab { height: 20px; padding: 0 6px 0 7px; line-height: 19px; border-right: 1px solid #999; }
.side-tab.active { color: #0a9ae0; position: relative; }
.side-tab.active::after { content: ""; position: absolute; left: 0; right: 0; top: 22px; height: 2px; background: #0a9ae0; }
.pin { position: absolute; right: 2px; top: 6px; width: 16px; height: 10px; }
.side-body { flex: 1; display: flex; min-height: 0; background: #fff; margin-left: 2px; }
.side-list { list-style: none; margin: -1px 0 0; padding: 0; width: 371px; flex: none; overflow: hidden; }
.side-row { height: 26px; display: flex; align-items: center; gap: 2px; padding-left: 20px; color: #222; white-space: nowrap; position: relative; }
.side-row.sub { padding-left: 39px; }
.side-row.muted { color: #777; }
.side-row.cyan { background: #66ffff; }
.side-row.green { background: #00cc00; }
.chev { position: absolute; left: 4px; top: 10px; width: 10px; height: 6px; }
.chev.up { transform: rotate(180deg); }
.side-scroll { width: 14px; flex: none; padding-left: 1px; }
.side-thumb { margin-top: 282px; width: 8px; height: 191px; border-radius: 4px; background: #dcdde0; }

/* content */
.content { width: 1181px; flex: none; padding-left: 3px; box-sizing: border-box; display: flex; flex-direction: column; height: 639px; }
.content-top { height: 104px; display: flex; flex: none; }
.content-head { flex: 1; }
h1 { margin: 2px 0 0; font-size: 16px; line-height: 20px; font-weight: 700; color: #333; }
.action-icons { display: flex; gap: 9px; padding-left: 2px; margin-top: 1px; height: 20px; align-items: center; }
.filter { display: flex; height: 20px; margin-top: 12px; align-items: stretch; padding-left: 4px; }
.filter label { width: 123px; flex: none; align-self: center; padding-top: 2px; }
.filter .field { width: 188px; }
.filter.loose { margin-top: 4px; gap: 4px; }
.filter.loose label { margin-right: -4px; }
.filter.loose .field { width: 182px; }
.filter:not(.loose) .sq-btn { margin-right: 1px; }
.sq-btn { width: 20px; height: 20px; flex: none; box-sizing: border-box; display: flex; align-items: center; justify-content: center; border: 1px solid #ddd; border-radius: 4px; background: #eee; }
.sq-btn.pressed { background: #ccc; border-color: #bbb; }
.field { box-sizing: border-box; height: 20px; border: 1px solid #aaa; background: #fff; padding: 0 2px; font: inherit; outline: none; color: #111; }
.drop-col { width: 220px; flex: none; display: flex; flex-direction: column; align-items: flex-end; }
.max-btn { width: 16px; height: 18px; margin-top: 2px; margin-right: 1px; border: 1px solid #ddd; border-radius: 4px; display: flex; align-items: center; justify-content: center; box-sizing: border-box; margin-bottom: 1px; }
.max-btn svg { width: 10px; height: 10px; }
.drop-box {
  box-sizing: border-box;
  width: 220px;
  height: 82px;
  border: 1px solid #999;
  display: flex;
  align-items: center;
  justify-content: center;
  text-align: center;
  padding: 0 24px;
  font-size: 12.3px;
  line-height: 13px;
  color: #333;
}

.table {
  width: 1177px;
  height: 292px;
  flex: none;
  box-sizing: border-box;
  border: 1px solid #999;
  display: flex;
  flex-direction: column;
  font-size: 12.4px;
  background: #fff;
}
.t-row { display: grid; grid-template-columns: 114px 262px 524px 265px 10px; height: 19px; align-items: center; }
.t-row > div { padding-left: 4px; white-space: nowrap; box-sizing: border-box; height: 100%; line-height: 19px; overflow: hidden; }
.t-head { height: 17px; flex: none; background: #f6f6f6; font-size: 10.6px; color: #333; }
.t-head > div { border-right: 1px solid #aaa; line-height: 18px; }
.sort { width: 9px; height: 5px; margin-left: 2px; vertical-align: 1px; }
.t-row.selected { background: #cfe0fa; margin-right: 10px; }
.count { height: 32px; flex: none; font-size: 9.5px; padding-left: 10px; line-height: 18px; box-sizing: border-box; }

.details {
  margin: -6px 0 0 2px;
  padding: 0 3px 3px;
  border: 1px solid #aaa;
  width: 1174px;
  box-sizing: border-box;
  height: 215px;
  flex: none;
  min-width: 0;
}
legend { font-size: 12.5px; padding: 0 2px; margin-left: 0; line-height: 14px; color: #333; }
.details-box { border: 1px solid #aaa; background: #fff; margin-top: 3px; height: 194px; box-sizing: border-box; }
.details-head { height: 18px; background: #f6f6f6; font-size: 10.6px; line-height: 18px; padding-left: 3px; width: 1152px; box-sizing: border-box; border-right: 1px solid #aaa; }
.details-text { padding: 4px 0 0 3px; font-size: 12.4px; line-height: 16px; color: #111; }
.em { font-style: italic; display: flex; align-items: center; }
.indent1 { padding-left: 10px; }
.indent2 { padding-left: 18px; }
.risk { color: #8a7ac8; }

/* right rail */
.rail { flex: 1; display: flex; flex-direction: column; align-items: center; padding-top: 4px; }
.rail-list { width: 22px; }
.rail-item { height: 45px; box-sizing: border-box; padding-top: 2px; margin-top: 4px; border-bottom: 1px solid #ccc; display: flex; flex-direction: column; align-items: center; gap: 3px; font-size: 12px; color: #333; }
.rail-item:first-child { margin-top: 0; }
.rail-item .ic { width: 20px; height: 20px; }
.rail-item.hot { background: #ff9999; }
.rail-item span { line-height: 14px; }
.gear { margin-top: auto; margin-bottom: 9px; width: 17px; height: 17px; }

/* status */
.status { height: 30px; flex: none; display: flex; align-items: center; font-size: 12.5px; color: #333; }
.feature-search { width: 906px; margin-left: 6px; height: 18px; box-sizing: border-box; border: 1px solid #aaa; background: #fff; display: flex; align-items: center; flex: none; }
.feature-text { color: #999; font-size: 11px; padding-left: 2px; flex: 1; }
.feature-drop { width: 15px; height: 16px; border-left: 1px solid #aaa; position: relative; background: #f6f6f6; }
.feature-drop::after { content: ""; position: absolute; left: 4px; top: 6px; border: 4px solid transparent; border-top-color: #555; border-bottom: 0; }
.st-group { height: 21px; display: flex; align-items: center; border-left: 1px solid #ccc; flex: none; box-sizing: border-box; }
.g1 { width: 156px; margin-left: 6px; padding-left: 2px; gap: 11px; }
.g1 span:first-of-type { margin-left: -2px; }
.g2 { width: 78px; padding-left: 3px; gap: 4px; }
.g2 .far { margin-left: 10px; }
.g3 { width: 119px; padding-left: 4px; gap: 2px; }
.g3 > span:nth-of-type(1) { margin: 0 6px 0 8px; }
.dot { width: 22px; height: 22px; border-radius: 50%; display: flex; align-items: center; justify-content: center; }
.pink { background: #ffc4c4; }
.violet { background: #ff88ff; }
.orange { background: #ff9900; }
.g4 { width: 93px; padding-left: 4px; gap: 10px; }
.g5 { width: 75px; padding-left: 8px; gap: 6px; border-right: 1px solid #ccc; }
.g6 { margin-left: 64px; padding-left: 9px; width: 97px; gap: 7px; }
.clock { color: #111; margin-left: 4px; }

/* dialog */
.dialog {
  position: absolute;
  left: 493px;
  top: 357px;
  width: 613px;
  height: 139px;
  box-sizing: border-box;
  border: 1px solid #555;
  background: #f6f6f6;
  box-shadow: 0 2px 14px rgba(0, 0, 0, .3);
}
.dialog-title { height: 30px; background: #fff; display: flex; align-items: center; gap: 5px; padding: 0 8px; font-size: 11.5px; color: #111; }
.dialog-close { margin-left: auto; width: 12px; height: 12px; margin-right: 1px; }
.dialog-body { padding: 5px 4px 0 8px; font-size: 11px; }
.dialog-row { display: flex; align-items: center; height: 20px; }
.dialog-row.second { margin-top: 4px; }
.radio { width: 13px; height: 13px; box-sizing: border-box; border-radius: 50%; border: 1px solid #666; background: #fff; flex: none; }
.radio.on { border-color: #0a9ae0; border-width: 1.5px; background: radial-gradient(circle, #0a9ae0 0 3.6px, #fff 4px); }
.radio-label { margin-left: 4px; width: 141px; flex: none; white-space: nowrap; }
.field.big { flex: 1; margin-left: 1px; font-size: 13px; height: 20px; }
.dialog-btns { display: flex; gap: 10px; margin-left: 188px; margin-top: 26px; font-size: 10.6px; }
.dlg-btn { height: 25px; width: 61px; border: 1px solid #ddd; border-radius: 3px; background: #f6f6f6; color: #333; font: inherit; padding: 0; }
.dlg-btn.wide { width: 86px; }
.dlg-btn.primary { background: #0a9ae0; color: #fff; border-color: #0a9ae0; width: 51px; }
</style>
